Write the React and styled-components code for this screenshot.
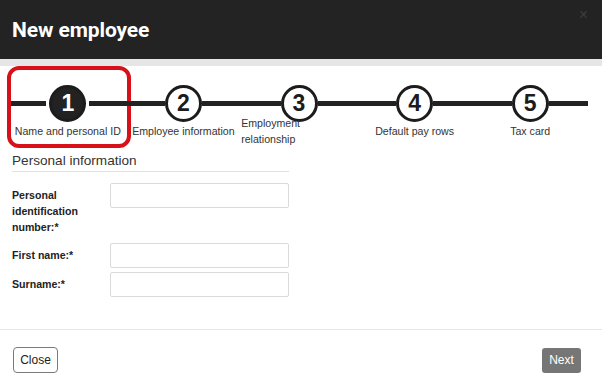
import React from "react"
import styled, { createGlobalStyle, css } from "styled-components"

const GlobalStyle = createGlobalStyle`
  html, body {
    margin: 0;
    padding: 0;
    background: #ffffff;
  }
  body {
    font-family: "Liberation Sans", Arial, sans-serif;
  }
  * {
    box-sizing: border-box;
  }
`

const steps = [
  { number: 1, label: "Name and personal ID", active: true },
  { number: 2, label: "Employee information" },
  { number: 3, label: "Employment relationship", narrow: true },
  { number: 4, label: "Default pay rows" },
  { number: 5, label: "Tax card" },
]

const App = () => {
  return (
    <>
      <GlobalStyle />
      <Modal>
        <Header>
          <Title>New employee</Title>
          <CloseX>×</CloseX>
        </Header>
        <Body>
          <Stepper>
            {steps.map(step => (
              <Step key={step.number} highlighted={step.active}>
                <Track>
                  <Segment />
                  <Circle active={step.active}>{step.number}</Circle>
                  <Segment />
                </Track>
                <LabelArea narrow={step.narrow}>
                  <StepLabel narrow={step.narrow}>{step.label}</StepLabel>
                </LabelArea>
              </Step>
            ))}
          </Stepper>
          <Section>
            <SectionTitle>Personal information</SectionTitle>
            <Form>
              <Row>
                <FieldLabel>Personal identification number:*</FieldLabel>
                <Input type="text" />
              </Row>
              <Row>
                <FieldLabel>First name:*</FieldLabel>
                <Input type="text" />
              </Row>
              <Row>
                <FieldLabel>Surname:*</FieldLabel>
                <Input type="text" />
              </Row>
            </Form>
          </Section>
        </Body>
        <Footer>
          <OutlineButton>Close</OutlineButton>
          <PrimaryButton>Next</PrimaryButton>
        </Footer>
      </Modal>
    </>
  )
}

export default App

const Modal = styled.div`
  width: 602px;
  height: 390px;
  display: flex;
  flex-direction: column;
  background: #ffffff;
  overflow: hidden;
`

const Header = styled.div`
  height: 66px;
  display: flex;
  justify-content: space-between;
  align-items: flex-start;
  background: #232323;
  border-bottom: 7px solid #e6e6e6;
  padding: 0 14px 0 12px;
`

const Title = styled.h1`
  margin: 0;
  align-self: center;
  font-family: Roboto, "Liberation Sans", sans-serif;
  font-weight: 700;
  font-size: 21px;
  line-height: 24px;
  color: #ffffff;
  letter-spacing: -0.1px;
`

const CloseX = styled.span`
  margin-top: 5px;
  font-size: 16px;
  line-height: 20px;
  color: #3c3c3c;
`

const Body = styled.div`
  flex: 1;
  display: flex;
  flex-direction: column;
`

const Stepper = styled.div`
  display: grid;
  grid-template-columns: repeat(5, 1fr);
  margin: 0 14px 0 10px;
`

const Step = styled.div`
  position: relative;
  display: flex;
  flex-direction: column;
  align-items: center;
  padding-top: 19px;
  min-width: 0;

  ${props => props.highlighted && css`
    &::after {
      content: "";
      position: absolute;
      top: 0;
      bottom: -1px;
      left: -3px;
      right: -5px;
      border: 4px solid #d7101a;
      border-radius: 12px;
      pointer-events: none;
    }
  `}
`

const Track = styled.div`
  width: 100%;
  height: 37px;
  display: flex;
  align-items: center;
`

const Segment = styled.div`
  flex: 1;
  height: 5px;
  background: #222222;
`

const Circle = styled.div`
  width: 37px;
  height: 37px;
  flex: none;
  display: flex;
  align-items: center;
  justify-content: center;
  border-radius: 50%;
  border: 3px solid #1c1c1c;
  background: ${props => (props.active ? "#222222" : "#ffffff")};
  color: ${props => (props.active ? "#ffffff" : "#1c1c1c")};
  font-family: "Liberation Sans", Arial, sans-serif;
  font-weight: 700;
  font-size: 23px;
  margin: ${props => (props.active ? "0 3px" : "0")};
`

const LabelArea = styled.div`
  margin-top: -7px;
  height: 32px;
  display: flex;
  align-items: center;
  align-self: ${props => (props.narrow ? "flex-start" : "center")};
`

const StepLabel = styled.span`
  font-size: 10.6px;
  line-height: 16px;
  color: #333333;
  text-align: ${props => (props.narrow ? "left" : "center")};
  max-width: ${props => (props.narrow ? "62px" : "none")};
  white-space: ${props => (props.narrow ? "normal" : "nowrap")};
`

const Section = styled.div`
  width: 277px;
  margin: 5px 0 0 12px;
`

const SectionTitle = styled.h2`
  margin: 0;
  padding-bottom: 2px;
  border-bottom: 1px solid #e2e2e2;
  font-weight: 400;
  font-size: 13.6px;
  line-height: 17px;
  color: #333333;
`

const Form = styled.div`
  display: flex;
  flex-direction: column;
  gap: 4px;
  margin-top: 11px;
`

const Row = styled.div`
  display: grid;
  grid-template-columns: 98px 1fr;
  align-items: flex-start;
`

const FieldLabel = styled.label`
  padding: 4px 0;
  font-weight: 700;
  font-size: 10.6px;
  line-height: 16px;
  color: #222222;
`

const Input = styled.input`
  height: 25px;
  width: 100%;
  margin: 0;
  border: 1px solid #dadada;
  border-radius: 2px;
  background: #ffffff;
  outline: none;
`

const Footer = styled.div`
  height: 61px;
  display: flex;
  justify-content: space-between;
  align-items: center;
  border-top: 1px solid #e6e6e6;
  padding: 0 21px 0 13px;
`

const OutlineButton = styled.button`
  height: 26px;
  width: 45px;
  padding: 0;
  background: #ffffff;
  border: 1.5px solid #7a7a7a;
  border-radius: 4px;
  font-family: "Liberation Sans", Arial, sans-serif;
  font-size: 12px;
  color: #222222;
  cursor: pointer;
`

const PrimaryButton = styled.button`
  height: 25px;
  width: 39px;
  padding: 0;
  background: #767676;
  border: none;
  border-radius: 3px;
  font-family: "Liberation Sans", Arial, sans-serif;
  font-size: 12px;
  color: #ffffff;
  cursor: pointer;
`
